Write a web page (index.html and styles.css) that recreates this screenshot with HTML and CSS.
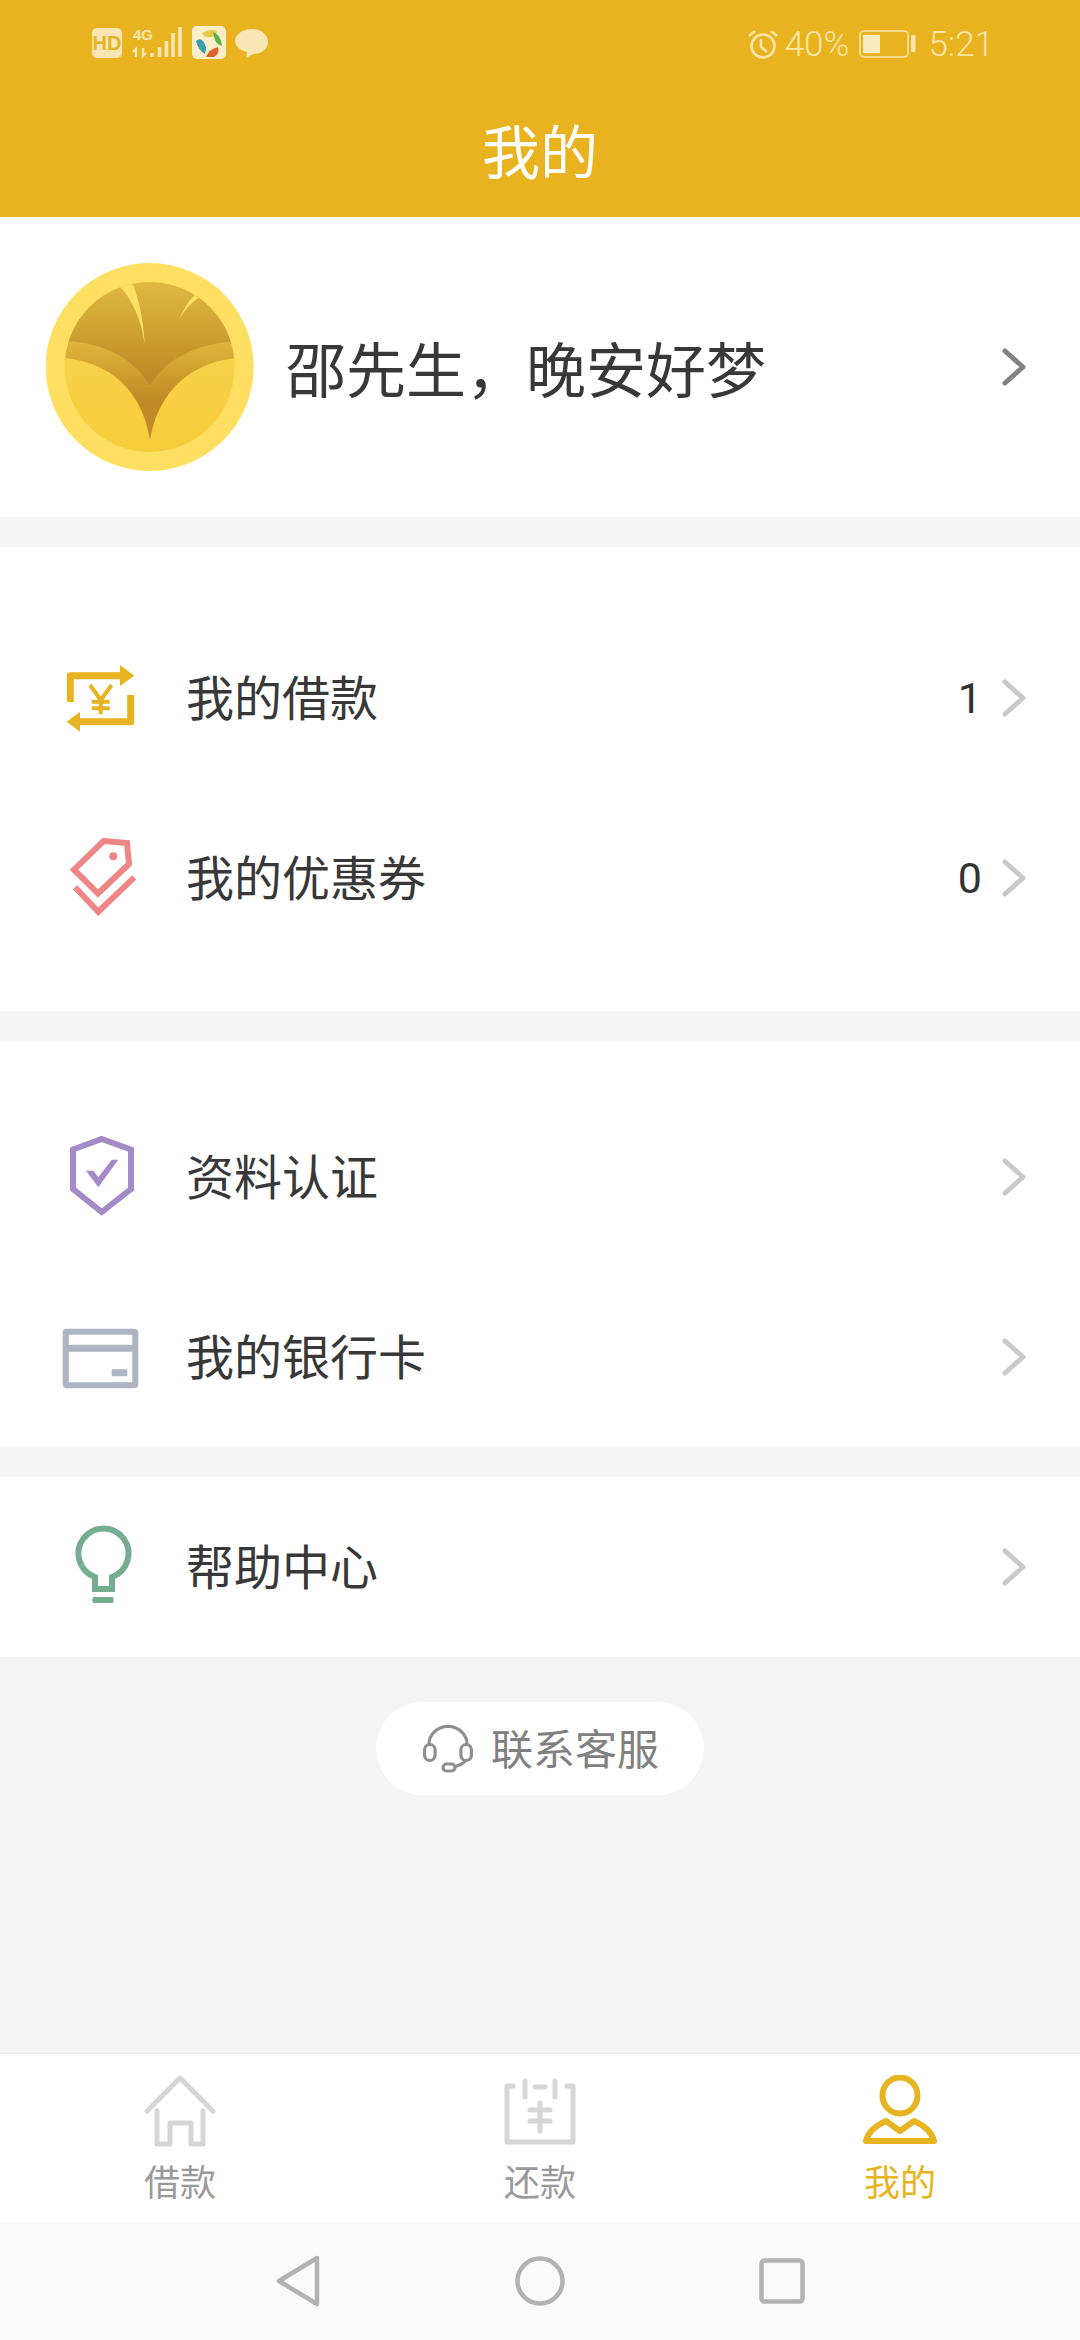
FILE: index.html
```html
<!DOCTYPE html>
<html lang="zh-CN">
<head>
<meta charset="utf-8">
<title>我的</title>
<link rel="stylesheet" href="styles.css">
</head>
<body>
<div class="screen">
  <header class="header">
    <div class="status">
      <div class="status-left">
        <svg class="st-icons" width="180" height="44" viewBox="0 0 180 44">
          <rect x="0" y="4" width="30" height="30" rx="5" fill="#f8e6b4"/>
          <text x="15" y="26" class="hd">HD</text>
          <text x="41" y="16" class="net">4G</text>
          <path d="M44 33v-8l-3 3M51 24v8l3-3" fill="none" stroke="#f8e6b4" stroke-width="2.4"/>
          <path d="M60 33v-4M67.500 33v-10M74.500 33v-16M81 33v-24M88 33v-30" stroke="#f8e6b4" stroke-width="3.600" fill="none"/>
          <rect x="100" y="2" width="34" height="33" rx="5" fill="#fbeec8"/>
          <path d="M110 9q8-5 15-2q-2 7-9 6q-4 0-6-4z" fill="#e6c84a"/>
          <path d="M104 17q2 9 9 13q3-8-3-14q-3-2-6 1z" fill="#3a9fb0"/>
          <path d="M121 8q8 3 9 14q-8-2-9-14z" fill="#5cb544"/>
          <path d="M114 33q3-8 12-10q2 7-4 10z" fill="#e0622a"/>
          <path d="M160 5c9 0 16 6 16 13s-7 12-15 12l-7 4 1-6c-7-2-12-6-12-11 0-7 8-12 17-12z" fill="#f8e6b4"/>
        </svg>
      </div>
      <div class="status-right">
        <svg class="alarm" width="30" height="30" viewBox="0 0 30 30" fill="none" stroke="#f9e6a8" stroke-width="2.600"><circle cx="15" cy="17" r="11.500"/><path d="M13 10v8l6 5M1 7l6-5M29 7l-6-5"/></svg>
        <span class="pct">40%</span>
        <svg class="batt" width="57" height="28" viewBox="0 0 57 28"><rect x="1" y="1" width="48" height="26" rx="4" fill="none" stroke="#f9e6a8" stroke-width="1.600"/><rect x="4" y="5" width="17" height="18" fill="#f9ebc0"/><rect x="52" y="5" width="4.500" height="17" rx="1" fill="#f9e6a8"/></svg>
        <span class="time">5:21</span>
      </div>
    </div>
    <h1 class="title">我的</h1>
  </header>

  <section class="profile">
    <svg class="avatar" width="208" height="208" viewBox="140 130 624 624">
      <defs>
        <clipPath id="disc"><circle cx="451" cy="442" r="255"/></clipPath>
        <linearGradient id="fan" x1="0" y1="0" x2="0" y2="1"><stop offset="0" stop-color="#e0ba42"/><stop offset="1" stop-color="#bb8624"/></linearGradient>
        <linearGradient id="band" x1="0" y1="0" x2="0" y2="1"><stop offset="0" stop-color="#e0b63c"/><stop offset="0.6" stop-color="#bf8a26"/><stop offset="1" stop-color="#c08a26"/></linearGradient>
        <linearGradient id="petal" x1="0" y1="0" x2="0" y2="1"><stop offset="0" stop-color="#f8d755"/><stop offset="1" stop-color="#f6cc3a"/></linearGradient>
      </defs>
      <circle cx="451" cy="442" r="312" fill="#fedf62"/>
      <g clip-path="url(#disc)">
        <rect x="190" y="180" width="524" height="524" fill="url(#petal)"/>
        <path d="M150 368 L150 180 L750 180 L750 368 C620 370 500 420 452 500 C400 420 300 365 150 368Z" fill="url(#fan)"/>
        <path d="M190 365 C310 365 410 420 452 500 C495 420 590 370 714 365 L714 415 C590 425 480 500 452 660 C425 500 320 425 190 415Z" fill="url(#band)"/>
        <path d="M360 200 L397 185 C420 240 432 300 436 372 C425 300 400 240 360 200Z" fill="#fedf62"/>
        <path d="M585 226 L598 234 C575 250 555 272 540 298 C552 270 566 246 585 226Z" fill="#fedf62"/>
      </g>
    </svg>
    <span class="greeting">邵先生，晚安好梦</span>
    <svg class="chev" width="26" height="40" viewBox="0 0 26 40"><path d="M4 4l18 16L4 36" fill="none" stroke="#838383" stroke-width="5" stroke-linecap="round" stroke-linejoin="round"/></svg>
  </section>

  <section class="card card-loans">
    <div class="row">
      <svg class="ico" width="80" height="90" viewBox="0 0 80 90" fill="none" stroke="#e7b320" stroke-width="7" stroke-linejoin="round">
        <path d="M10.300 49V22.700H62M70.700 42V68.700H18"/>
        <path d="M60 12l14.300 10.700L60 33zM20 58.700L6.700 68.700 20 78.700z" fill="#e7b320" stroke="none"/>
        <path d="M30 32l10.700 15L51.700 32M40.700 47v14M31.700 48.700h18M31.700 55.300h18" stroke-width="4" stroke-linejoin="miter"/>
      </svg>
      <span class="label">我的借款</span>
      <span class="count">1</span>
      <svg class="chev light" width="26" height="40" viewBox="0 0 26 40"><path d="M4 4l18 16L4 36" fill="none" stroke="#c9c9c9" stroke-width="5" stroke-linecap="round" stroke-linejoin="round"/></svg>
    </div>
    <div class="row">
      <svg class="ico" width="80" height="90" viewBox="0 0 80 90" fill="none" stroke="#ef8585" stroke-width="6">
        <path d="M43.500 8l23.500 2 2 21-31 29.500L14 36.700z"/>
        <circle cx="53.300" cy="23.300" r="4" fill="#ef8585" stroke="none"/>
        <path d="M15 54.300l23.300 24.400 36-34.400"/>
      </svg>
      <span class="label">我的优惠券</span>
      <span class="count">0</span>
      <svg class="chev light" width="26" height="40" viewBox="0 0 26 40"><path d="M4 4l18 16L4 36" fill="none" stroke="#c9c9c9" stroke-width="5" stroke-linecap="round" stroke-linejoin="round"/></svg>
    </div>
  </section>

  <section class="card card-docs">
    <div class="row">
      <svg class="ico" width="80" height="90" viewBox="0 0 80 90">
        <path d="M41.700 7L71 17.500V57L41.700 80 13 57V17.500z" fill="none" stroke="#a48bc8" stroke-width="6"/>
        <path d="M26 38.700h7.300l5 6.600L51.700 27.700h6.600L38.300 55.300z" fill="#a48bc8"/>
      </svg>
      <span class="label">资料认证</span>
      <svg class="chev light" width="26" height="40" viewBox="0 0 26 40"><path d="M4 4l18 16L4 36" fill="none" stroke="#c9c9c9" stroke-width="5" stroke-linecap="round" stroke-linejoin="round"/></svg>
    </div>
    <div class="row">
      <svg class="ico" width="80" height="90" viewBox="0 0 80 90">
        <rect x="5.700" y="19.700" width="69.600" height="53.600" rx="1" fill="none" stroke="#aeb4c2" stroke-width="6"/>
        <path d="M6 36.300h69" stroke="#aeb4c2" stroke-width="7"/>
        <rect x="51.700" y="57.300" width="15.600" height="7" rx="1" fill="#aeb4c2"/>
      </svg>
      <span class="label">我的银行卡</span>
      <svg class="chev light" width="26" height="40" viewBox="0 0 26 40"><path d="M4 4l18 16L4 36" fill="none" stroke="#c9c9c9" stroke-width="5" stroke-linecap="round" stroke-linejoin="round"/></svg>
    </div>
  </section>

  <section class="card card-help">
    <div class="row">
      <svg class="ico" width="80" height="90" viewBox="0 0 80 90" fill="none" stroke="#75ad91" stroke-width="6">
        <path d="M35 67V55A25 25 0 1 1 52 55V67z"/>
        <rect x="32.500" y="75" width="21" height="6" rx="1.500" fill="#75ad91" stroke="none"/>
      </svg>
      <span class="label">帮助中心</span>
      <svg class="chev light" width="26" height="40" viewBox="0 0 26 40"><path d="M4 4l18 16L4 36" fill="none" stroke="#c9c9c9" stroke-width="5" stroke-linecap="round" stroke-linejoin="round"/></svg>
    </div>
  </section>

  <div class="contact-area">
    <div class="contact">
      <svg width="50" height="48" viewBox="0 0 50 48" fill="none" stroke="#8f8f8f" stroke-width="3.200">
        <path d="M6 21V19a19 17.500 0 0 1 38 0v2"/>
        <rect x="1.600" y="19.500" width="10.500" height="16" rx="5.200"/>
        <rect x="37.900" y="19.500" width="10.500" height="16" rx="5.200"/>
        <path d="M42 36c-1 3-6 4-11 6"/>
        <rect x="20" y="39" width="12" height="7" rx="3.500"/>
      </svg>
      <span class="contact-text">联系客服</span>
    </div>
  </div>

  <nav class="tabs">
    <div class="tab">
      <svg width="72" height="76" viewBox="0 0 72 76" fill="none" stroke="#d6d6d6" stroke-width="5" stroke-linecap="round" stroke-linejoin="round">
        <path d="M3 36L36 3l33 33"/>
        <path d="M13 36v33h13V48h21v21h12V36"/>
      </svg>
      <span class="tab-text">借款</span>
    </div>
    <div class="tab">
      <svg width="72" height="76" viewBox="0 0 72 76" fill="none" stroke="#d6d6d6" stroke-width="5" stroke-linecap="round" stroke-linejoin="round">
        <path d="M9 11H3v56h66V11h-6M21 6v16M51 6v16M31 12h10"/>
        <path d="M36 28v28M26 35h20M26 46h20" stroke-width="5"/>
      </svg>
      <span class="tab-text">还款</span>
    </div>
    <div class="tab active">
      <svg width="74" height="76" viewBox="0 0 74 76" fill="none" stroke="#e7b320" stroke-width="6" stroke-linejoin="round">
        <ellipse cx="37" cy="20.500" rx="17.500" ry="18"/>
        <path d="M23 46L37 56l14-10c9 4 18 11 20 20H3c2-9 11-16 20-20z"/>
      </svg>
      <span class="tab-text">我的</span>
    </div>
  </nav>

  <footer class="sysnav">
    <svg width="46" height="52" viewBox="0 0 46 52"><path d="M42 3L4 26l38 23z" fill="none" stroke="#b2b2b2" stroke-width="4.500" stroke-linejoin="round"/></svg>
    <svg width="50" height="50" viewBox="0 0 50 50"><circle cx="25" cy="25" r="22.500" fill="none" stroke="#b2b2b2" stroke-width="4.500"/></svg>
    <svg width="46" height="46" viewBox="0 0 46 46"><rect x="2.500" y="2.500" width="41" height="41" rx="3" fill="none" stroke="#b2b2b2" stroke-width="4.500"/></svg>
  </footer>
</div>
</body>
</html>
```
FILE: styles.css
```css
* { box-sizing: border-box; }
html, body { margin: 0; padding: 0; }
body { font-family: "Noto Sans CJK SC", "Noto Sans", sans-serif; background: #f4f4f4; }
.screen { width: 1080px; height: 2340px; display: flex; flex-direction: column; overflow: hidden; background: #f4f4f4; }

.header { height: 217px; background: #e8b31f; display: flex; flex-direction: column; flex: none; }
.status { height: 84px; padding: 24px 86px 0 92px; display: flex; justify-content: space-between; align-items: flex-start; flex: none; }
.status-left { display: flex; }
.status-right { display: flex; align-items: center; color: #f9e6a8; font-family: Roboto, sans-serif; font-weight: 300; font-size: 35px; height: 40px; }
.alarm { margin-right: 7px; }
.pct { margin-right: 10px; }
.time { margin-left: 12px; }
.hd { font: bold 20px "Liberation Sans", sans-serif; fill: #e8b31f; text-anchor: middle; }
.net { font: bold 15px "Liberation Sans", sans-serif; fill: #f8e6b4; }
.title { margin: 0; flex: 1; display: flex; align-items: flex-start; justify-content: center; padding-top: 32px; font-size: 58px; line-height: 66px; font-weight: 400; color: #fff; }

.profile { height: 300px; background: #fff; display: flex; align-items: center; padding: 0 53px 0 46px; flex: none; }
.avatar { flex: none; }
.greeting { margin-left: 32px; font-size: 60px; color: #383838; flex: 1; line-height: 80px; }
.chev { flex: none; }

.card { background: #fff; flex: none; }
.card-loans { margin-top: 30px; padding: 61px 0 43px; }
.card-docs { margin-top: 30px; padding-top: 46px; }
.card-help { margin-top: 30px; }
.row { height: 180px; display: flex; align-items: center; padding: 0 53px 0 60px; }
.ico { flex: none; margin-right: 46px; }
.label { flex: 1; font-size: 48px; color: #383838; line-height: 60px; padding-bottom: 6px; }
.count { font-family: Roboto, sans-serif; font-size: 43px; color: #333; margin-right: 19px; }

.contact-area { flex: 1; display: flex; justify-content: center; align-items: flex-start; padding-top: 45px; }
.contact { width: 328px; height: 93px; border-radius: 47px; background: #fff; display: flex; align-items: center; padding-left: 47px; gap: 18px; }
.contact-text { font-size: 42px; color: #808080; line-height: 50px; padding-bottom: 3px; }

.tabs { height: 170px; flex: none; background: #fff; border-top: 2px solid #eeeeee; display: flex; }
.tab { flex: 1; display: flex; flex-direction: column; align-items: center; padding-top: 21px; color: #9a9a9a; }
.tab.active { color: #e7b320; }
.tab-text { font-size: 36px; line-height: 40px; margin-top: 9px; }

.sysnav { height: 118px; flex: none; background: #fafafa; display: flex; align-items: center; justify-content: center; gap: 194px; }
```
